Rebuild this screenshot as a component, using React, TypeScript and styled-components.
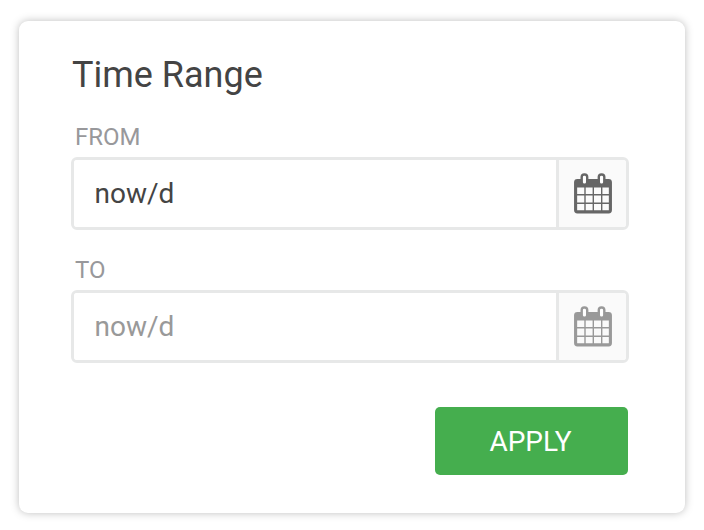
import React from 'react';
import styled, { createGlobalStyle } from 'styled-components';

const GlobalStyle = createGlobalStyle`
  *, *::before, *::after { box-sizing: border-box; }
  body { margin: 0; background: #fff; font-family: Roboto, "Liberation Sans", sans-serif; }
`;

const Page = styled.main`
  width: 704px;
  height: 530px;
  padding: 21px 19px 17px 18.5px;
  overflow: hidden;
`;

const Card = styled.form`
  width: 666.5px;
  height: 492px;
  padding: 32px 57px 0 52px;
  display: flex;
  flex-direction: column;
  background: #fff;
  border-radius: 9px;
  box-shadow: 0 0 9px rgba(0, 0, 0, 0.26);
`;

const Title = styled.h2`
  margin: 0 0 0 1.5px;
  font-size: 36px;
  line-height: 44px;
  font-weight: 400;
  color: #444;
`;

const Field = styled.div`
  height: 133px;
  padding-top: 26px;
`;

const Label = styled.label`
  display: block;
  height: 34px;
  padding-left: 4.5px;
  font-size: 24px;
  line-height: 28px;
  color: #98989b;
`;

const InputGroup = styled.div`
  display: flex;
  width: 558.5px;
  height: 73px;
  border: 3px solid #e7e8e8;
  border-radius: 6px;
  overflow: hidden;
`;

const Input = styled.input`
  flex: 1;
  min-width: 0;
  padding: 0 21px;
  border: 0;
  outline: 0;
  background: #fff;
  font: 400 28px Roboto, sans-serif;
  color: #444;
  &::placeholder { color: #999; opacity: 1; }
`;

const CalendarButton = styled.button<{ $muted?: boolean }>`
  display: flex;
  align-items: center;
  justify-content: center;
  width: 70px;
  padding: 0;
  border: 0;
  border-left: 3px solid #e7e8e8;
  background: #fafafa;
  color: ${(p) => (p.$muted ? '#999' : '#666')};
`;

const ApplyButton = styled.button`
  align-self: flex-end;
  width: 193px;
  height: 68.5px;
  margin: 43.5px 0 0;
  padding: 1px 2px 0 0;
  border: 0;
  border-radius: 5px;
  background: #45ae4e;
  color: #fff;
  font: 400 28px Roboto, sans-serif;
`;

const CalendarIcon = () => (
  <svg width="38" height="41" viewBox="0 0 38 41" fill="none" stroke="currentColor">
    <rect x="1.6" y="7.5" width="34.8" height="31.4" rx="1.8" strokeWidth="3.1" />
    <path d="M1 7h36v7.500H1z" fill="currentColor" stroke="none" />
    <path d="M11 14v25M19.300 14v25M27.700 14v25M2 21.800h34M2 30.200h34" strokeWidth="1.400" />
    <rect x="7.700" y="1.500" width="5.500" height="10.300" rx="2.600" fill="#fff" strokeWidth="2.400" />
    <rect x="24.800" y="1.500" width="5.500" height="10.300" rx="2.600" fill="#fff" strokeWidth="2.400" />
  </svg>
);

export default function App() {
  return (
    <>
      <GlobalStyle />
      <Page>
        <Card onSubmit={(e) => e.preventDefault()}>
          <Title>Time Range</Title>
          <Field>
            <Label htmlFor="from">FROM</Label>
            <InputGroup>
              <Input id="from" defaultValue="now/d" />
              <CalendarButton type="button" aria-label="Choose start"><CalendarIcon /></CalendarButton>
            </InputGroup>
          </Field>
          <Field>
            <Label htmlFor="to">TO</Label>
            <InputGroup>
              <Input id="to" placeholder="now/d" />
              <CalendarButton type="button" aria-label="Choose end" $muted><CalendarIcon /></CalendarButton>
            </InputGroup>
          </Field>
          <ApplyButton type="submit">APPLY</ApplyButton>
        </Card>
      </Page>
    </>
  );
}
